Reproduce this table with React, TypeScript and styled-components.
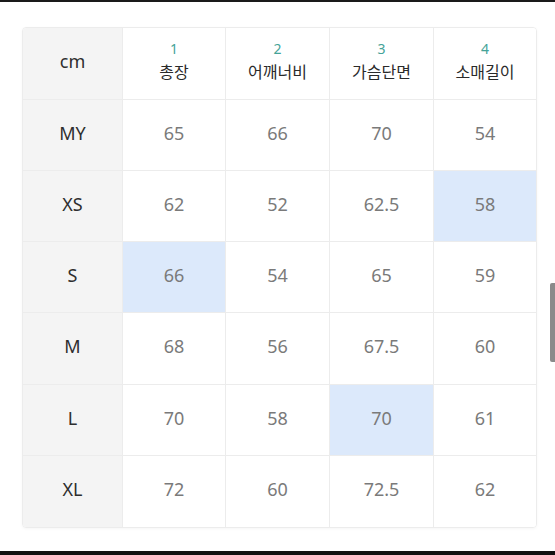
import React from "react";
import styled, { createGlobalStyle } from "styled-components";

const Global = createGlobalStyle`
  html, body { margin: 0; padding: 0; background: #fff; }
  body { font-family: "Noto Sans", "Noto Sans CJK KR", sans-serif; }
`;

const Screen = styled.div`
  position: relative;
  width: 555px;
  height: 555px;
  display: flex;
  flex-direction: column;
  background: #fff;
  overflow: hidden;
`;

const TopBar = styled.div`
  height: 2px;
  background: #1a1a1a;
  flex: none;
`;

const Body = styled.div`
  flex: 1;
  padding: 25px 0 0 22px;
`;

const BottomBar = styled.div`
  height: 4px;
  background: #111;
  flex: none;
`;

const Table = styled.div`
  display: grid;
  grid-template-columns: 100px 103px 104px 104px 102px;
  grid-template-rows: 72px 71px 71px 71px 72px 71px 71px;
  width: fit-content;
  border: 1px solid #ececec;
  border-radius: 4px;
  overflow: hidden;
  box-shadow: 0 1px 3px rgba(0, 0, 0, 0.04);
`;

const Cell = styled.div<{ $label?: boolean; $hl?: boolean; $last?: boolean; $lastRow?: boolean }>`
  display: flex;
  flex-direction: column;
  align-items: center;
  justify-content: center;
  box-sizing: border-box;
  border-right: ${(p) => (p.$last ? "none" : "1px solid #ececec")};
  border-bottom: ${(p) => (p.$lastRow ? "none" : "1px solid #ececec")};
  background: ${(p) => (p.$label ? "#f4f4f4" : p.$hl ? "#dce9fb" : "#fff")};
  color: ${(p) => (p.$label ? "#2e2e2e" : "#7a7a7a")};
  font-size: 18px;
  line-height: 1;
  padding-bottom: 5px;
`;

const Num = styled.div`
  color: #45a398;
  font-size: 14px;
  line-height: 16px;
  margin-bottom: 4px;
`;

const HeadText = styled.div`
  color: #2a2a2a;
  font-size: 16px;
  line-height: 20px;
  font-family: "Noto Sans CJK KR", "Noto Sans", sans-serif;
`;

const Scrollbar = styled.div`
  position: absolute;
  right: 0;
  top: 283px;
  width: 5px;
  height: 79px;
  background: #8a8a8a;
  border-radius: 2px 0 0 2px;
`;

const headers = ["총장", "어깨너비", "가슴단면", "소매길이"];
const rows: [string, string[], number][] = [
  ["MY", ["65", "66", "70", "54"], -1],
  ["XS", ["62", "52", "62.5", "58"], 3],
  ["S", ["66", "54", "65", "59"], 0],
  ["M", ["68", "56", "67.5", "60"], -1],
  ["L", ["70", "58", "70", "61"], 2],
  ["XL", ["72", "60", "72.5", "62"], -1],
];

export default function App() {
  return (
    <Screen>
      <Global />
      <TopBar />
      <Body>
        <Table>
          <Cell $label>cm</Cell>
          {headers.map((h, i) => (
            <Cell key={h} $last={i === 3}>
              <Num>{i + 1}</Num>
              <HeadText>{h}</HeadText>
            </Cell>
          ))}
          {rows.map(([label, vals, hl], r) => (
            <React.Fragment key={label}>
              <Cell $label $lastRow={r === rows.length - 1}>
                {label}
              </Cell>
              {vals.map((v, i) => (
                <Cell
                  key={i}
                  $hl={hl === i}
                  $last={i === 3}
                  $lastRow={r === rows.length - 1}
                >
                  {v}
                </Cell>
              ))}
            </React.Fragment>
          ))}
        </Table>
      </Body>
      <BottomBar />
      <Scrollbar />
    </Screen>
  );
}
